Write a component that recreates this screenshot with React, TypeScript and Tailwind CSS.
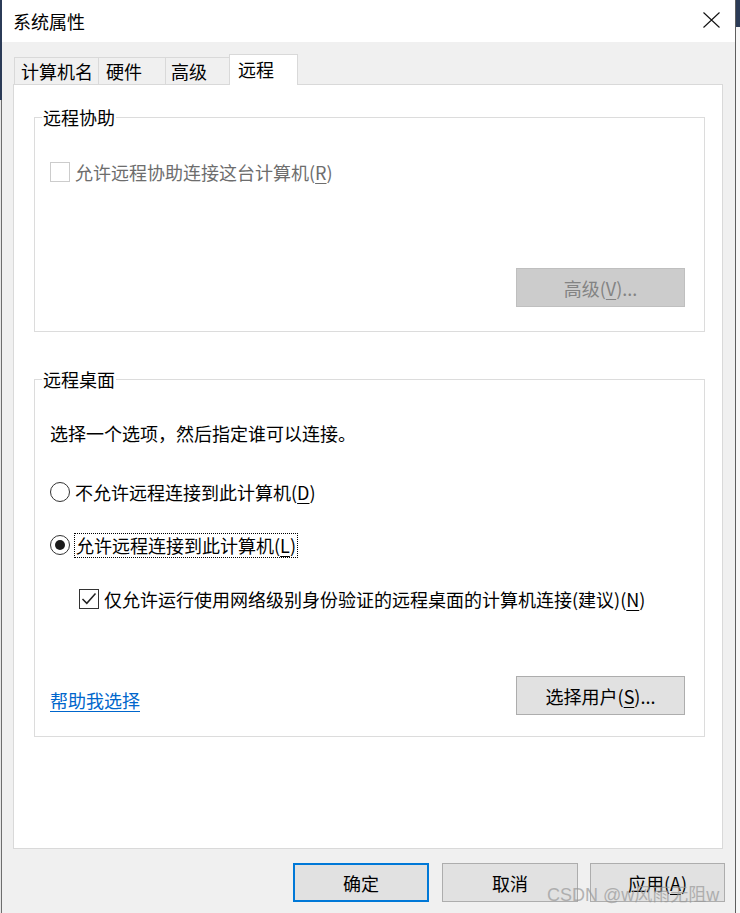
import { ReactNode } from "react"

const font = "font-['Noto_Sans_CJK_SC','Noto_Sans',sans-serif]"

function CheckBox({ checked, disabled }: { checked?: boolean; disabled?: boolean }) {
  return (
    <span
      className={`flex h-[20px] w-[20px] shrink-0 items-center justify-center border bg-white ${
        disabled ? "border-[#cccccc]" : "border-[#333333]"
      }`}
    >
      {checked && (
        <svg width="18" height="18" viewBox="0 0 18 18">
          <path d="M2.5 9 L6.8 13.3 L15.5 3.5" fill="none" stroke="#222" strokeWidth="1.5" />
        </svg>
      )}
    </span>
  )
}

function Radio({ checked }: { checked?: boolean }) {
  return (
    <span className="flex h-[20px] w-[20px] shrink-0 items-center justify-center rounded-full border border-[#333333] bg-white">
      {checked && <span className="h-[10px] w-[10px] rounded-full bg-[#1a1a1a]" />}
    </span>
  )
}

interface ButtonProps {
  children: ReactNode
  disabled?: boolean
  primary?: boolean
  className?: string
}

function Button({ children, disabled, primary, className = "" }: ButtonProps) {
  let look = "border border-[#adadad] bg-[#e1e1e1] text-black"
  if (primary) look = "border-2 border-[#0078d7] bg-[#e1e1e1] text-black"
  if (disabled) look = "border border-[#bfbfbf] bg-[#cccccc] text-[#838383]"
  return (
    <div className={`flex h-[39px] shrink-0 items-center justify-center ${look} ${className}`}>
      <span>{children}</span>
    </div>
  )
}

function Key({ k }: { k: string }) {
  return <span className="underline underline-offset-[3px]">{k}</span>
}

export default function App() {
  return (
    <div className={`relative flex h-[913px] w-[740px] overflow-hidden text-[18px] leading-[24px] text-black ${font}`}>
      {/* window behind, left edge */}
      <div className="flex w-[2px] flex-col">
        <div className="h-[100px] bg-[#2b3b57]" />
        <div className="flex flex-1">
          <div className="w-[1px] bg-[#e6e6e6]" />
          <div className="w-[1px] bg-[#6e6e6e]" />
        </div>
      </div>

      {/* dialog */}
      <div className="flex w-[733px] flex-col bg-[#f0f0f0]">
        <div className="flex h-[42px] items-center justify-between bg-white pl-[11px] pr-[15px]">
          <span className="text-[18px]">系统属性</span>
          <svg width="17" height="16" viewBox="0 0 17 16" className="mb-[2px]">
            <path d="M0.5 0.5 L16.5 15.5 M16.5 0.5 L0.5 15.5" stroke="#111" strokeWidth="1.1" />
          </svg>
        </div>

        <div className="flex flex-col px-[11px] pt-[12px]">
          {/* tabs */}
          <div className="flex h-[30px] items-end pl-[1px]">
            <div className="flex h-[27px] w-[84px] items-center border-l border-t border-[#d9d9d9] pl-[6px]">计算机名</div>
            <div className="flex h-[27px] w-[67px] items-center border-l border-t border-[#d9d9d9] pl-[7px]">硬件</div>
            <div className="flex h-[27px] w-[64px] items-center border-l border-t border-[#d9d9d9] pl-[5px]">高级</div>
            <div className="relative z-10 -mb-[1px] flex h-[31px] w-[69px] items-center border-x border-t border-[#d9d9d9] bg-white pb-[2px] pl-[8px]">
              远程
            </div>
          </div>

          {/* tab page */}
          <div className="h-[765px] w-[710px] border border-[#d9d9d9] bg-white pl-[20px] pt-[20px]">
            <fieldset className="w-[671px] border border-[#dcdcdc]">
              <legend className="ml-[7px] px-[1px] leading-[24px]">远程协助</legend>
              <div className="pb-[24px] pl-[15px] pr-[19px] pt-[31px]">
                <div className="flex h-[24px] items-center gap-[5px] text-[#6d6d6d]">
                  <CheckBox disabled />
                  <span>
                    允许远程协助连接这台计算机(<Key k="R" />)
                  </span>
                </div>
                <div className="mt-[84px] flex justify-end">
                  <Button disabled className="w-[169px]">
                    高级(<Key k="V" />)...
                  </Button>
                </div>
              </div>
            </fieldset>

            <fieldset className="mt-[35px] w-[671px] border border-[#dcdcdc]">
              <legend className="ml-[7px] px-[1px] leading-[24px]">远程桌面</legend>
              <div className="pb-[21px] pl-[15px] pr-[19px] pt-[30px]">
                <p className="h-[24px]">选择一个选项，然后指定谁可以连接。</p>
                <div className="mt-[35px] flex h-[24px] items-center gap-[5px]">
                  <Radio />
                  <span>
                    不允许远程连接到此计算机(<Key k="D" />)
                  </span>
                </div>
                <div className="mt-[29px] flex h-[24px] items-center gap-[4px]">
                  <Radio checked />
                  <span className="border border-dotted border-black px-[1px] leading-[23px]">
                    允许远程连接到此计算机(<Key k="L" />)
                  </span>
                </div>
                <div className="ml-[29px] mt-[30px] flex h-[24px] items-center gap-[5px]">
                  <CheckBox checked />
                  <span>
                    仅允许运行使用网络级别身份验证的远程桌面的计算机连接(建议)(<Key k="N" />)
                  </span>
                </div>
                <div className="mt-[65px] flex items-center justify-between">
                  <a className="mt-[9px] cursor-pointer text-[#0066cc] underline underline-offset-[3px]">帮助我选择</a>
                  <Button className="w-[169px]">
                    选择用户(<Key k="S" />)...
                  </Button>
                </div>
              </div>
            </fieldset>
          </div>

          {/* dialog buttons */}
          <div className="-mr-[1px] mt-[14px] flex justify-end">
            <Button primary className="w-[136px]">
              确定
            </Button>
            <Button className="ml-[13px] w-[136px]">取消</Button>
            <Button className="ml-[12px] w-[135px]">
              应用(<Key k="A" />)
            </Button>
          </div>
        </div>
      </div>

      {/* window behind, right edge */}
      <div className="flex w-[5px] flex-col border-l border-[#5e5e5e]">
        <div className="h-[27px] bg-[#2b3b57]" />
        <div className="flex-1 bg-[#f7f7f7]" />
      </div>

      {/* watermark */}
      <span className="pointer-events-none absolute left-[547px] top-[883px] font-['Liberation_Sans','Noto_Sans_CJK_SC',sans-serif] text-[18px] leading-[24px] text-[#999999] opacity-70">
        CSDN @w风雨无阻w
      </span>
    </div>
  )
}
